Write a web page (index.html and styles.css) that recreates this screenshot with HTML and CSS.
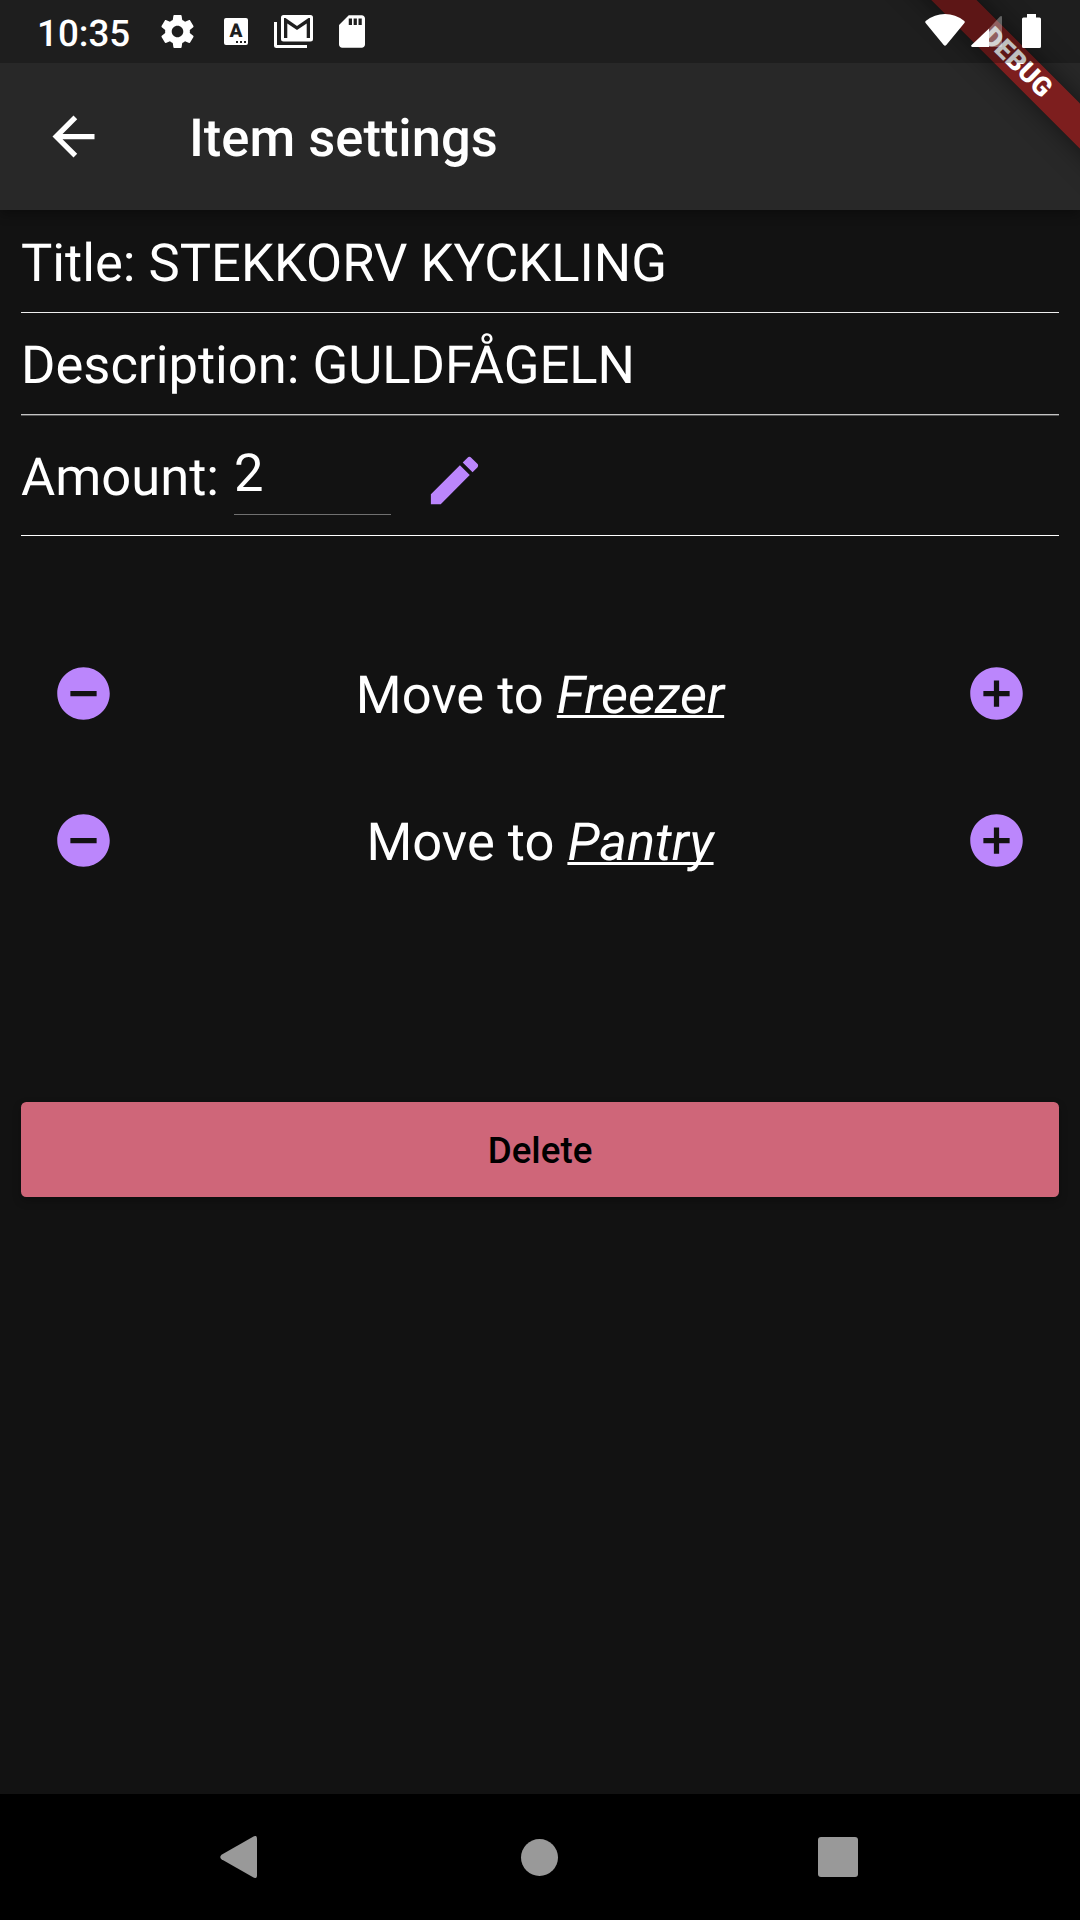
FILE: index.html
```html
<!DOCTYPE html>
<html lang="en">
<head>
<meta charset="utf-8">
<title>Item settings</title>
<link rel="stylesheet" href="styles.css">
</head>
<body>
<div class="screen">
  <header class="app-bar">
    <svg class="back" viewBox="0 0 24 24"><path d="M20 11H7.83l5.59-5.59L12 4l-8 8 8 8 1.41-1.41L7.83 13H20v-2z"/></svg>
    <h1 class="app-title">Item settings</h1>
  </header>
  <div class="banner-clip"><div class="banner"><span>DEBUG</span></div></div>
  <div class="status-bar">
    <span class="clock">10:35</span>
    <svg class="st-gear" viewBox="2 2 20 20"><path d="M19.43 12.98c.04-.32.07-.64.07-.98s-.03-.66-.07-.98l2.11-1.65c.19-.15.24-.42.12-.64l-2-3.46c-.12-.22-.39-.3-.61-.22l-2.49 1c-.52-.4-1.08-.73-1.69-.98l-.38-2.65C14.46 2.18 14.25 2 14 2h-4c-.25 0-.46.18-.49.42l-.38 2.65c-.61.25-1.17.59-1.69.98l-2.49-1c-.23-.09-.49 0-.61.22l-2 3.46c-.13.22-.07.49.12.64l2.11 1.65c-.04.32-.07.65-.07.98s.03.66.07.98l-2.11 1.65c-.19.15-.24.42-.12.64l2 3.46c.12.22.39.3.61.22l2.49-1c.52.4 1.08.73 1.69.98l.38 2.65c.03.24.24.42.49.42h4c.25 0 .46-.18.49-.42l.38-2.65c.61-.25 1.17-.59 1.69-.98l2.49 1c.23.09.49 0 .61-.22l2-3.46c.12-.22.07-.49-.12-.64l-2.11-1.65zM12 15.5c-1.93 0-3.5-1.57-3.5-3.5s1.57-3.5 3.5-3.5 3.5 1.57 3.5 3.5-1.57 3.5-3.5 3.5z"/></svg>
    <span class="st-lang">A<i></i></span>
    <svg class="st-mail" viewBox="0 0 39 33"><path d="M0 7h3v23h30v3H2.500Q0 33 0 30.500z"/><path fill-rule="evenodd" d="M9.500 0H36.500Q39 0 39 2.500V24Q39 26.500 36.500 26.500H9.500Q7 26.500 7 24V2.500Q7 0 9.500 0zM10 3V23H13.300V8.500L23 15L32.700 8.500V23H36V3H34.500L23 11L11.500 3z"/></svg>
    <svg class="st-sd" viewBox="4 2 16 20"><path d="M18 2h-8L4.020 8 4 20c0 1.100.9 2 2 2h12c1.100 0 2-.9 2-2V4c0-1.100-.9-2-2-2zm-6 6h-2V4h2v4zm3 0h-2V4h2v4zm3 0h-2V4h2v4z"/></svg>
    <span class="spacer"></span>
    <svg class="st-wifi" viewBox="0 0 40 32"><path d="M.6 9Q-.3 7.600 1 6.800Q9.500 0 20 0T39 6.800Q40.300 7.600 39.400 9L21.300 31Q20 32.400 18.700 31z"/></svg>
    <svg class="st-signal" viewBox="0 0 31 31"><path opacity=".32" d="M18 12.600 29 .5Q31-.8 31 1.500V29.500Q31 31 29.500 31H18z"/><path d="M18 12.600V31H1.300Q-.7 30.600.6 29z"/></svg>
    <svg class="st-battery" viewBox="0 0 19 34"><path d="M5 0h9v3.500h3.500Q19 3.500 19 5V32.500Q19 34 17.500 34h-16Q0 34 0 32.500V5Q0 3.500 1.500 3.500H5z"/></svg>
  </div>
  <main class="content">
    <div class="field"><p class="label">Title: STEKKORV KYCKLING</p></div>
    <div class="field field-desc"><p class="label">Description: GULDFÅGELN</p></div>
    <div class="field field-amount">
      <p class="label">Amount:</p>
      <div class="amount">2</div>
      <svg class="edit" viewBox="0 0 24 24"><path d="M3 17.250V21h3.750L17.810 9.940l-3.750-3.750L3 17.250zM20.710 7.040c.39-.39.39-1.020 0-1.410l-2.340-2.340c-.39-.39-1.020-.39-1.410 0l-1.830 1.830 3.750 3.750 1.830-1.830z"/></svg>
    </div>
    <section class="moves">
      <div class="move">
        <svg class="round" viewBox="0 0 24 24"><path d="M12 2C6.480 2 2 6.480 2 12s4.480 10 10 10 10-4.480 10-10S17.520 2 12 2zm5 11H7v-2h10v2z"/></svg>
        <p>Move to <em>Freezer</em></p>
        <svg class="round" viewBox="0 0 24 24"><path d="M12 2C6.480 2 2 6.480 2 12s4.480 10 10 10 10-4.480 10-10S17.520 2 12 2zm5 11h-4v4h-2v-4H7v-2h4V7h2v4h4v2z"/></svg>
      </div>
      <div class="move">
        <svg class="round" viewBox="0 0 24 24"><path d="M12 2C6.480 2 2 6.480 2 12s4.480 10 10 10 10-4.480 10-10S17.520 2 12 2zm5 11H7v-2h10v2z"/></svg>
        <p>Move to <em>Pantry</em></p>
        <svg class="round" viewBox="0 0 24 24"><path d="M12 2C6.480 2 2 6.480 2 12s4.480 10 10 10 10-4.480 10-10S17.520 2 12 2zm5 11h-4v4h-2v-4H7v-2h4V7h2v4h4v2z"/></svg>
      </div>
    </section>
    <button class="delete">Delete</button>
  </main>
  <nav class="nav-bar">
    <svg class="nav-back" viewBox="0 0 37 42"><path d="M33.500.5Q37-1.200 37 2.500V39.500Q37 43.200 33.500 41.500L1.500 23.300Q-1 21 1.500 18.700z"/></svg>
    <span class="nav-home"></span>
    <span class="nav-recent"></span>
  </nav>
</div>
</body>
</html>
```
FILE: styles.css
```css
* { box-sizing: border-box; }
body {
  margin: 0;
  background: #121212;
  color: #fff;
  font-family: Roboto, sans-serif;
  text-rendering: geometricPrecision;
}
h1, p { margin: 0; }
svg { display: block; fill: #fff; flex: none; }

.screen {
  position: relative;
  width: 1080px;
  height: 1920px;
  overflow: hidden;
  display: flex;
  flex-direction: column;
}

/* top bars */
.app-bar {
  flex: none;
  height: 210px;
  padding: 63px 42px 0;
  display: flex;
  align-items: center;
  background: #282828;
  box-shadow: 0 5px 10px rgba(0, 0, 0, .3);
}
.back { width: 63px; height: 63px; }
.app-title {
  margin-left: 84px;
  padding-top: 2px;
  font-size: 52.5px;
  font-weight: 500;
  line-height: 62px;
}
.status-bar {
  position: absolute;
  inset: 0 0 auto;
  height: 63px;
  padding-left: 37px;
  padding-right: 39px;
  display: flex;
  align-items: center;
  background: rgba(0, 0, 0, .25);
}
.clock { width: 125px; font-size: 36.75px; font-weight: 500; line-height: 43px; padding-top: 3px; }
.st-gear { width: 33px; height: 33px; margin-left: -1px; }
.st-lang {
  position: relative;
  width: 24px;
  height: 27px;
  margin-left: 30px;
  border-radius: 2px;
  background: #fff;
  color: #1e1e1e;
  font-size: 19px;
  font-weight: 900;
  line-height: 26px;
  text-align: center;
}
.st-lang i {
  position: absolute;
  right: 1px;
  bottom: 2px;
  width: 11px;
  height: 2px;
  background: repeating-linear-gradient(90deg, #1e1e1e 0 2.500px, transparent 2.500px 4px);
}
.st-mail { width: 39px; height: 33px; margin-left: 26px; }
.st-sd { width: 26px; height: 33px; margin-left: 26px; }
.spacer { flex: 1; }
.st-wifi { width: 40px; height: 32px; margin-right: 6.500px; margin-top: -3px; }
.st-signal { width: 31px; height: 31px; margin-right: 20px; }
.st-battery { width: 19px; height: 34px; margin-top: -1px; }

.banner-clip {
  position: absolute;
  top: 0;
  right: 0;
  width: 240px;
  height: 240px;
  overflow: hidden;
}
.banner {
  position: absolute;
  left: 27.200px;
  top: 47.100px;
  width: 300px;
  height: 31.500px;
  transform: rotate(45deg);
  background: rgba(171, 24, 24, .65);
  box-shadow: 0 0 26px rgba(0, 0, 0, .5);
  text-align: center;
  font-size: 26.800px;
  font-weight: 900;
  line-height: 31.500px;
}

/* item details */
.content { flex: 1; padding: 0 21px; font-size: 52.500px; line-height: 62px; }
.field {
  height: 103px;
  padding-top: 22px;
  border-bottom: 1px solid #eee;
}
.field-desc { height: 102px; padding-top: 21px; border-color: #c4c4c4; box-shadow: 0 1px #555; }
.field-amount { height: 121px; display: flex; padding-top: 31px; border-color: #fff; }
.amount {
  width: 157px;
  height: 73px;
  margin: -4px 32px 0 15px;
  border-bottom: 1px solid #707070;
}
.edit { width: 63px; height: 63px; margin-top: 3px; fill: #bb86fc; }

.moves { padding: 84px 31px 0; }
.move { height: 147px; display: flex; align-items: center; justify-content: space-between; }
.move p { padding-top: 2px; }
.move em { text-decoration-thickness: 2.600px; text-decoration-line: underline; text-decoration-skip-ink: none; text-underline-offset: 2px; }
.round { width: 63px; height: 63px; fill: #bb86fc; }

.delete {
  display: block;
  width: 100%;
  height: 94.500px;
  margin-top: 188px;
  padding: 2px 0 0;
  border: 0;
  border-radius: 5.250px;
  background: #cf6679;
  color: #000;
  font: 500 36.750px/43px Roboto, sans-serif;
  box-shadow: 0 4px 8px rgba(0, 0, 0, .25);
}

/* system navigation */
.nav-bar {
  flex: none;
  height: 126px;
  padding: 0 222px 0 220px;
  display: flex;
  align-items: center;
  justify-content: space-between;
  background: #000;
}
.nav-back { width: 37px; height: 42px; fill: #999; }
.nav-home { width: 37px; height: 37px; margin-left: 3.500px; border-radius: 50%; background: #999; }
.nav-recent { width: 40px; height: 40px; border-radius: 3px; background: #999; }
```
